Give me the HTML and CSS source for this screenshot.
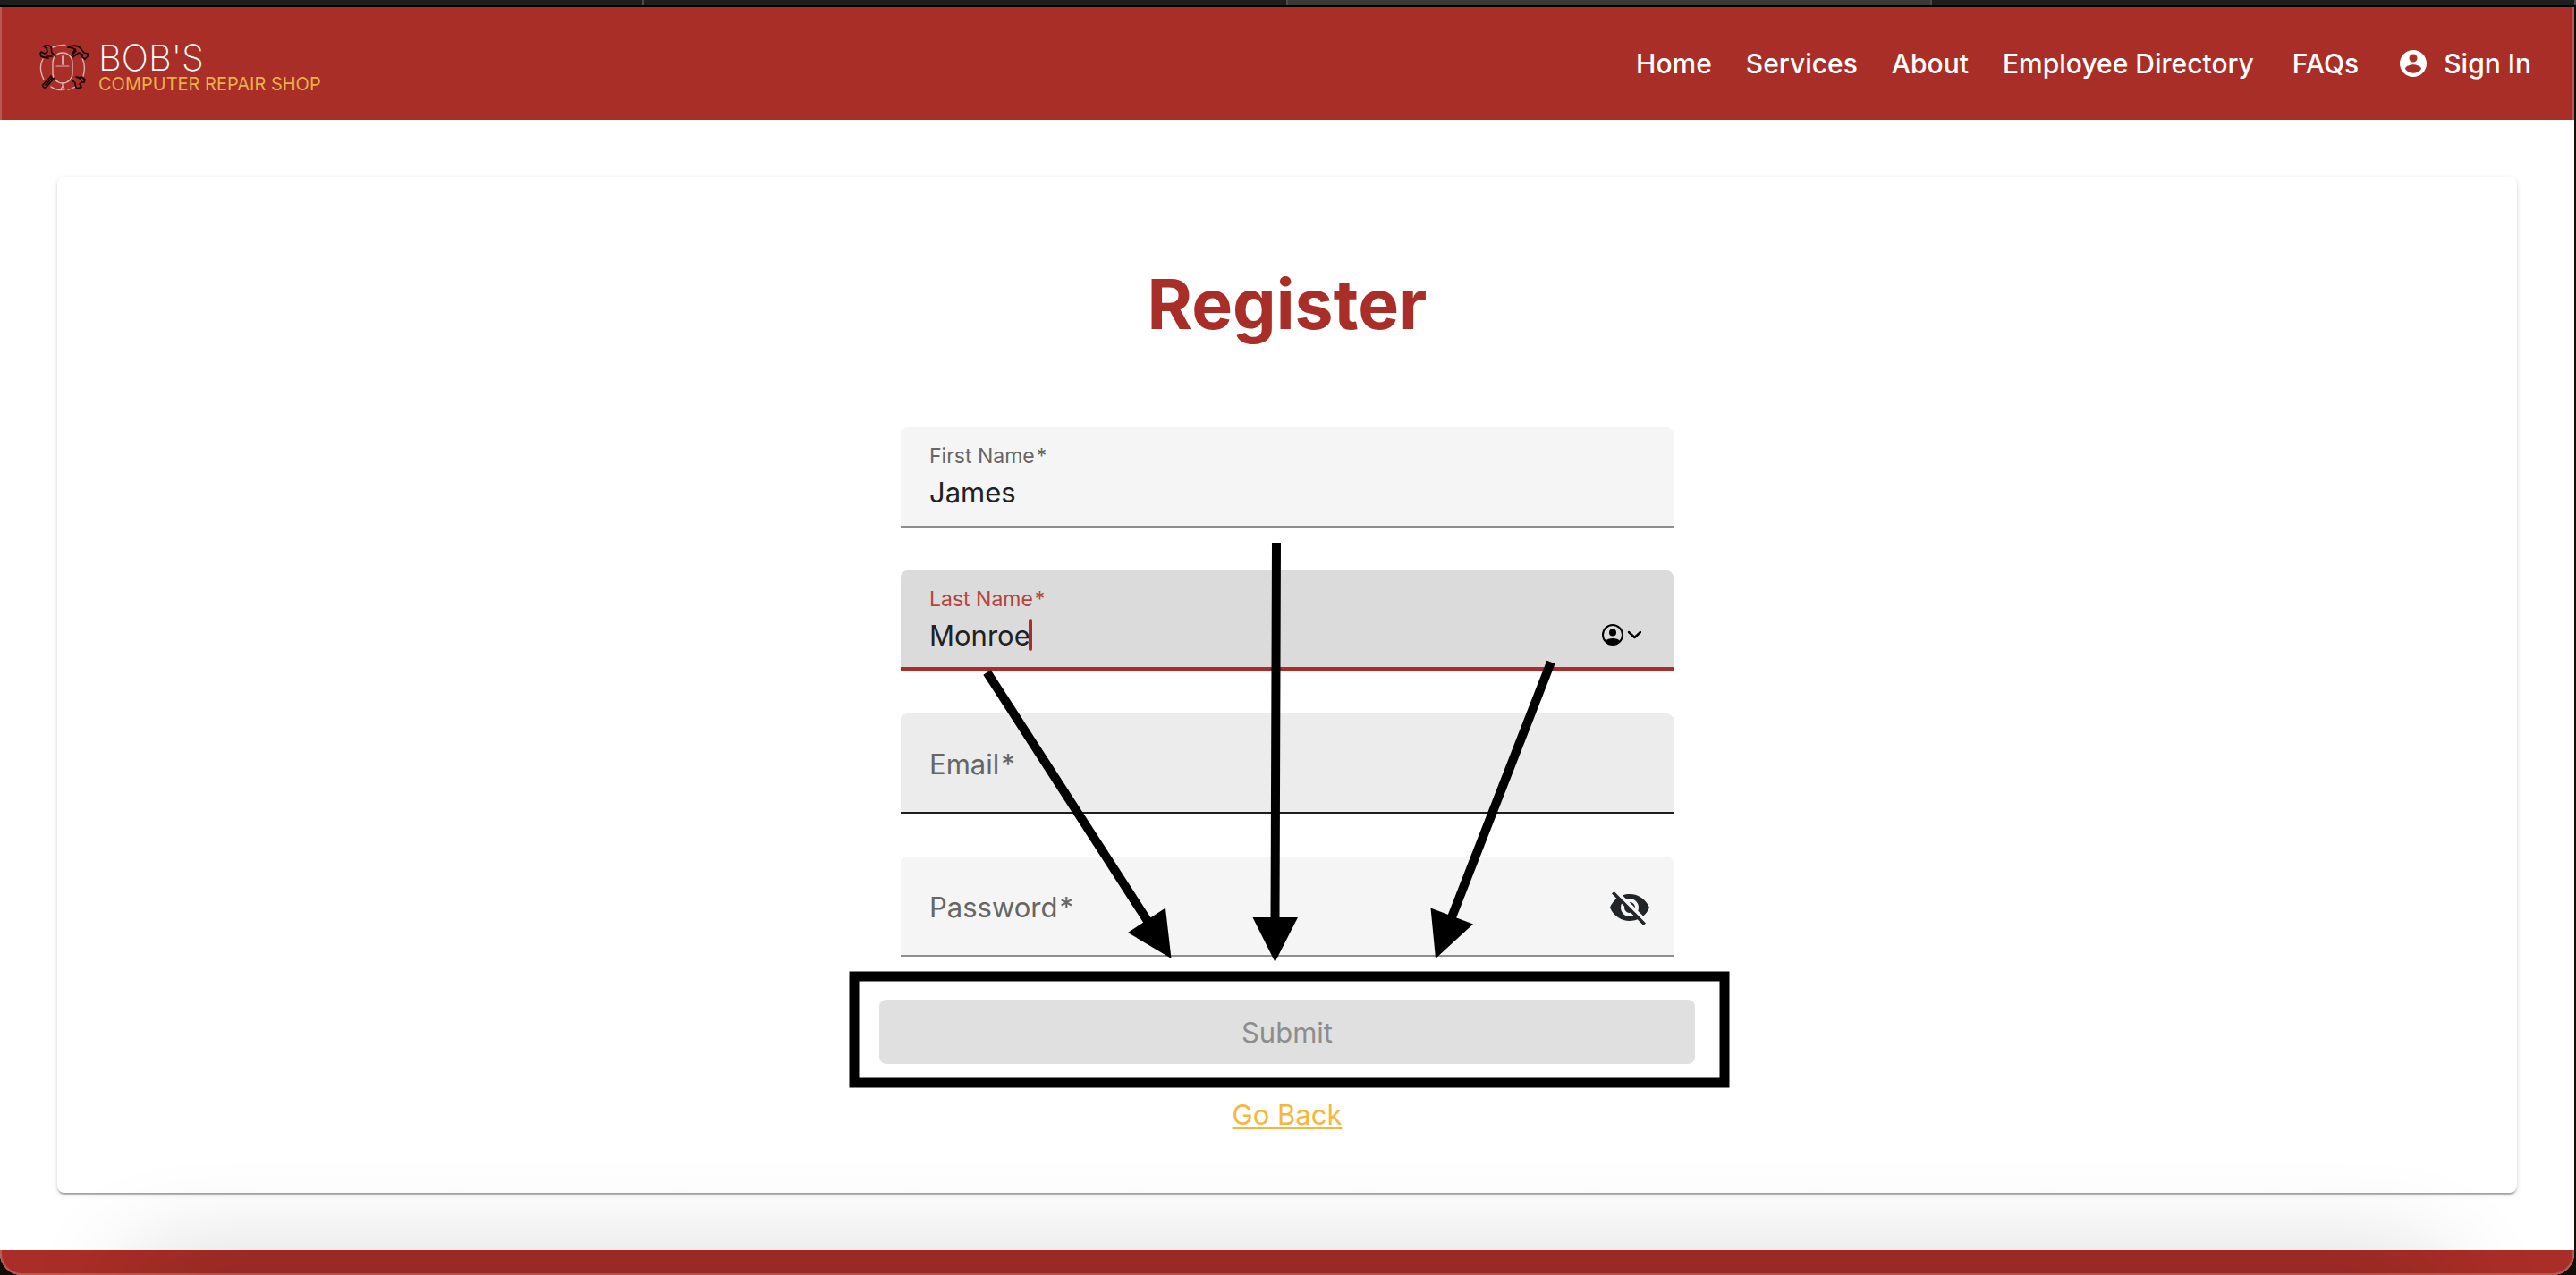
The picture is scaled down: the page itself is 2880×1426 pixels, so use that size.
FILE: index.html
```html
<!DOCTYPE html>
<html lang="en">
<head>
<meta charset="utf-8">
<meta name="viewport" content="width=device-width, initial-scale=1">
<title>Register | Bob's Computer Repair Shop</title>
<link rel="stylesheet" href="styles.css">
</head>
<body>
<div class="tab-strip" aria-hidden="true">
  <span class="tab"></span><span class="tab"></span><span class="tab tab-active"></span><span class="tab"></span>
</div>
<div class="window">
  <header class="header">
    <a class="logo" href="#">
      <svg class="logo-mark" viewBox="0 0 56 54" fill="none" stroke-linecap="round" stroke-linejoin="round" aria-hidden="true">
        <g stroke="#d9b4b2" stroke-width="1.4">
          <rect x="15" y="10" width="22" height="34" rx="11"/>
          <path d="M26 14v9" stroke-width="1.8"/>
          <path d="M19 25h14" stroke-width="1"/>
          <path d="M26 44v3c0 2-2 2-2 4h4c0-2-2-2-2-4M15 4c4-2 9-3 14-2.500M4 17c-4 7-3 15 1 23M48 16c3 7 3 14 1 20M13 48c4 3 8 4 12 3.500M32 51c3 0 5-1 8-3"/>
        </g>
        <g stroke="#120404" stroke-width="1.700">
          <path d="M10 16c-3 0-5-1-8-2-1-2-1-4 0-5l4 2 3-2-1-4-3-2c2-2 6-2 8 1 1 2 0 4 1 6l4 4M8 14l6 0"/>
          <path d="M32 4c4-2 9-3 13 0l5 6 4 1 1 2-4 4-3-2v-3l-4-2-7 5M32 4l6 1 3 3-5 5M40 6l-3 5"/>
          <path d="M13 36L4 46c-1 2 2 4 4 2l9-10M13 37l3 3M7 46l7-8"/>
          <path d="M41 37c2 2 4 1 6 0l4 3-1 3h-3l-2 2 2 3-4 2c-3-1-3-4-3-6l-4-4M43 37l4 4"/>
        </g>
      </svg>
      <span class="logo-text">
        <span class="logo-name">BOB'S</span>
        <span class="logo-sub">COMPUTER REPAIR SHOP</span>
      </span>
    </a>
    <nav class="nav">
      <a href="#">Home</a>
      <a href="#">Services</a>
      <a href="#">About</a>
      <a href="#">Employee Directory</a>
      <a class="nav-faqs" href="#">FAQs</a>
      <a class="nav-sign-in" href="#">
        <svg width="36" height="36" viewBox="0 0 24 24" fill="currentColor" aria-hidden="true"><path d="M12 2C6.480 2 2 6.480 2 12s4.480 10 10 10 10-4.480 10-10S17.520 2 12 2zm0 3c1.660 0 3 1.340 3 3s-1.340 3-3 3-3-1.340-3-3 1.340-3 3-3zm0 14.200c-2.500 0-4.710-1.280-6-3.220.030-1.990 4-3.080 6-3.080 1.990 0 5.970 1.090 6 3.080-1.290 1.940-3.500 3.220-6 3.220z"/></svg>
        Sign In
      </a>
    </nav>
  </header>

  <main class="main">
    <section class="card">
      <h1 class="title">Register</h1>
      <form class="form">
        <div class="fields">
          <div class="field">
            <label for="first-name">First Name<span class="required">*</span></label>
            <input id="first-name" type="text" value="James">
          </div>
          <div class="field field-focused">
            <label for="last-name">Last Name<span class="required">*</span></label>
            <div class="field-row">
              <input id="last-name" type="text" value="Monroe">
              <span class="caret"></span>
              <button class="autofill" type="button" aria-label="Autofill contact">
                <svg width="44" height="24" viewBox="0 0 44 24" fill="none" stroke="#000" stroke-width="2" aria-hidden="true">
                  <circle cx="12" cy="12" r="11"/>
                  <circle cx="12" cy="9.500" r="4" fill="#000" stroke="none"/>
                  <path d="M4 19c2-4 14-4 16 0-4 5-12 5-16 0z" fill="#000" stroke="none"/>
                  <path d="M30 9l6.500 6L43 9" stroke-width="2.400" stroke-linecap="round" stroke-linejoin="round"/>
                </svg>
              </button>
            </div>
          </div>
          <div class="field field-empty field-hover">
            <label for="email">Email<span class="required">*</span></label>
            <input id="email" type="email">
          </div>
          <div class="field field-empty">
            <label for="password">Password<span class="required">*</span></label>
            <input id="password" type="password">
            <button class="reveal" type="button" aria-label="Show password">
              <svg width="48" height="48" viewBox="0 0 24 24" fill="#212529" aria-hidden="true"><path d="M12 7c2.760 0 5 2.240 5 5 0 .650-.130 1.260-.360 1.830l2.920 2.920c1.510-1.260 2.700-2.890 3.430-4.750-1.730-4.390-6-7.500-11-7.500-1.400 0-2.740.250-3.980.700l2.160 2.160C10.740 7.130 11.350 7 12 7zM2 4.270l2.280 2.280.460.460C3.080 8.300 1.780 10.020 1 12c1.730 4.390 6 7.500 11 7.500 1.550 0 3.030-.300 4.380-.840l.420.420L19.730 22 21 20.730 3.270 3 2 4.270zM7.530 9.800l1.550 1.550c-.050.210-.080.430-.080.650 0 1.660 1.340 3 3 3 .220 0 .440-.030.650-.080l1.550 1.550c-.670.330-1.410.530-2.200.530-2.760 0-5-2.240-5-5 0-.790.200-1.530.530-2.200zm4.310-.780l3.150 3.150.020-.160c0-1.660-1.340-3-3-3l-.170.010z"/></svg>
            </button>
          </div>
        </div>
        <button class="submit" type="submit" disabled>Submit</button>
        <a class="back" href="#">Go Back</a>
        <svg class="annotation" viewBox="0 0 912 788" fill="#000" stroke="#000" stroke-width="10" aria-hidden="true">
          <path d="M120.500 274L300 552M444 129L442.500 552M751 262.500L640 548" fill="none"/>
          <path d="M278 565L320 537.500 326.500 594zM417.500 548H468L442.500 598zM616.500 537.500L664 555.500 622 594z" stroke="none"/>
          <rect x="-28" y="614" width="973" height="119" fill="none" stroke-width="11"/>
        </svg>
      </form>
    </section>
  </main>
  <footer class="footer"></footer>
</div>
</body>
</html>
```
FILE: styles.css
```css
* {
  box-sizing: border-box;
}

body {
  margin: 0;
  min-height: 100vh;
  display: flex;
  flex-direction: column;
  background: #120d05;
  font-family: Inter, "Liberation Sans", sans-serif;
  font-size: 31px;
  color: #212121;
}

/* Sliver of the browser's tab strip */
.tab-strip {
  display: grid;
  grid-template-columns: repeat(4, 1fr);
  height: 8px;
  background: #1e1e1e;
  border-bottom: 2px solid #000;
}

.tab {
  border-right: 2px solid #4b4b4b;
}

.tab-active {
  background: #383834;
}

.window {
  position: relative;
  flex: 1;
  display: flex;
  flex-direction: column;
  margin-right: 2px;
  overflow: hidden;
  border-radius: 0 0 24px 24px;
  background: #fff;
}

/* Light rim round the window, and the dock's shade over its lower edge */
.window::before,
.window::after {
  content: "";
  position: absolute;
  pointer-events: none;
}

.window::before {
  inset: -2px 0 0;
  border: 2px solid rgba(255, 255, 255, 0.2);
  border-radius: 0 0 24px 24px;
  z-index: 1;
}

.window::after {
  left: 160px;
  right: 160px;
  top: 100%;
  height: 80px;
  box-shadow: 0 0 120px 10px rgba(0, 0, 0, 0.2);
}

.header {
  display: flex;
  align-items: center;
  justify-content: space-between;
  height: 126px;
  padding: 0 48px 0 44px;
  background: #a92e27;
}

.logo {
  display: flex;
  align-items: center;
  gap: 10px;
  padding-top: 10px;
  text-decoration: none;
}

.logo-mark {
  width: 56px;
  height: 54px;
}

.logo-text {
  display: flex;
  flex-direction: column;
}

.logo-name {
  font-size: 40px;
  font-weight: 200;
  line-height: 36px;
  color: #fff;
}

.logo-sub {
  font-size: 20px;
  line-height: 22px;
  color: #eab04a;
}

.nav {
  display: flex;
  align-items: center;
  gap: 38px;
  font-size: 30px;
  font-weight: 500;
}

.nav a {
  color: #fff;
  text-decoration: none;
}

.nav-faqs {
  margin: 0 5px;
}

.nav .nav-sign-in {
  display: flex;
  align-items: center;
  gap: 16px;
}

.main {
  padding: 64px;
}

.card {
  display: flex;
  flex-direction: column;
  align-items: center;
  gap: 92px;
  padding: 96px 32px 66px;
  border-radius: 8px;
  background: #fff;
  box-shadow: 0 4px 2px -2px rgba(0, 0, 0, 0.2), 0 2px 2px rgba(0, 0, 0, 0.14), 0 2px 6px rgba(0, 0, 0, 0.12);
}

.title {
  margin: 0;
  font-size: 77px;
  line-height: 92px;
  color: #a92e27;
}

.form {
  position: relative;
  display: flex;
  flex-direction: column;
  align-items: center;
  width: 912px;
  max-width: 100%;
}

.fields {
  align-self: stretch;
  display: flex;
  flex-direction: column;
  gap: 48px;
  padding: 0 24px;
}

.field {
  display: flex;
  flex-direction: column;
  gap: 4px;
  height: 112px;
  padding: 16px 32px;
  border-radius: 8px 8px 0 0;
  background: #f5f5f5;
  box-shadow: inset 0 -2px #8e8e8e;
}

.field label {
  font-size: 23px;
  line-height: 32px;
  color: #666;
}

.required {
  margin-left: 2px;
}

.field input {
  height: 40px;
  padding: 0;
  border: 0;
  outline: 0;
  background: none;
  font: inherit;
  color: #212121;
}

.field button {
  display: flex;
  padding: 0;
  border: 0;
  background: none;
}

.field-focused {
  background: #dbdbdb;
  box-shadow: inset 0 -4px #a92e27;
}

.field-focused label {
  color: #b5443e;
}

.field-row {
  display: flex;
  align-items: center;
}

.field-row input {
  field-sizing: content;
}

.caret {
  width: 4px;
  height: 36px;
  margin-left: -2px;
  border-radius: 2px;
  background: #a92e27;
}

.field .autofill {
  margin: 0 4px 0 auto;
}

/* An empty field's label rests over its input, at full size */
.field-empty {
  display: grid;
  grid-template-columns: 1fr auto;
  align-items: center;
  padding: 2px 25px 0 32px;
}

.field-empty label,
.field-empty input {
  grid-area: 1 / 1;
}

.field-empty label {
  font-size: 31px;
  line-height: 40px;
}

.field-hover {
  background: #ececec;
  box-shadow: inset 0 -2px #1e1e1e;
}

.submit {
  align-self: stretch;
  height: 72px;
  margin: 48px 0 36px;
  border: 0;
  border-radius: 8px;
  background: #e0e0e0;
  font: inherit;
  color: #8d8d8d;
}

.back {
  line-height: 42px;
  color: #f5b73d;
  text-underline-offset: 3px;
  text-decoration-thickness: 2px;
}

.annotation {
  position: absolute;
  inset: 0;
  width: 100%;
  height: 788px;
  overflow: visible;
  pointer-events: none;
}

.footer {
  flex: 1;
  min-height: 28px;
  background: #a92e27;
}
```
